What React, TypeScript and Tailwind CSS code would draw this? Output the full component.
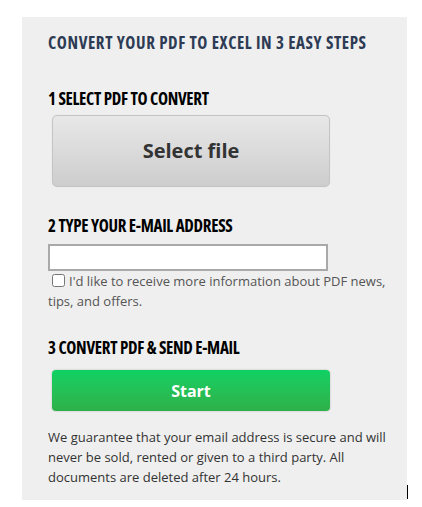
import { useState } from 'react'

const heading = "font-['Open_Sans',sans-serif] font-bold font-stretch-condensed uppercase text-[17px] leading-[24px]"

function Step(props: { title: string, className?: string, children?: React.ReactNode }) {
    return (
        <div className={props.className}>
            <h2 className={`${heading} tracking-[-0.3px] text-black`}>{props.title}</h2>
            {props.children}
        </div>
    )
}

export default function App() {
    const [email, setEmail] = useState("")
    const [optIn, setOptIn] = useState(false)

    return (
        <div className="flex items-start pl-[22px] pt-[17px] bg-white">
            <div className="w-[385px] h-[483px] bg-[#efefef] pl-[26px] pr-[14px] pt-[14px] font-['Open_Sans',sans-serif]">
                <h1 className={`${heading} tracking-[0.6px] text-[#2d3b55]`}>Convert your PDF to Excel in 3 easy steps</h1>

                <Step title="1 Select PDF to convert" className="mt-[32px]">
                    <button className="mt-[4px] ml-[4px] w-[278px] h-[72px] rounded-[5px] border border-[#c4c4c4] bg-gradient-to-b from-[#e8e8e8] to-[#cdcdcd] shadow-[0_0_1px_rgba(0,0,0,0.15)] text-[20px] font-bold text-[#333]">
                        Select file
                    </button>
                </Step>

                <Step title="2 Type your e-mail address" className="mt-[27px]">
                    <input
                        type="text"
                        value={email}
                        onChange={e => setEmail(e.target.value)}
                        className="mt-[6px] block w-[280px] h-[27px] bg-white border-2 border-[#a9a9a9] outline-none px-1 text-[13px]"
                    />
                    <label className="block mt-[0px] text-[13px] leading-[20px] text-[#555]">
                        <input
                            type="checkbox"
                            checked={optIn}
                            onChange={() => setOptIn(!optIn)}
                            className="ml-[4px] mr-[4px] w-[13px] h-[13px] align-[-1px]"
                        />
                        I'd like to receive more information about PDF news, tips, and offers.
                    </label>
                </Step>

                <Step title="3 Convert PDF & send e-mail" className="mt-[25px]">
                    <button className="mt-[10px] ml-[4px] w-[278px] h-[41px] rounded-[4px] bg-gradient-to-b from-[#0dd163] to-[#2eb04a] shadow-[0_0_2px_rgba(0,0,0,0.25)] text-[16px] font-bold text-white">
                        Start
                    </button>
                </Step>

                <p className="mt-[16px] text-[13px] leading-[20px] text-[#333]">
                    We guarantee that your email address is secure and will never be sold, rented or given to a third party. All documents are deleted after 24 hours.
                </p>
            </div>
            <div className="w-px h-[14px] bg-black self-end mb-[1px]" />
        </div>
    )
}
